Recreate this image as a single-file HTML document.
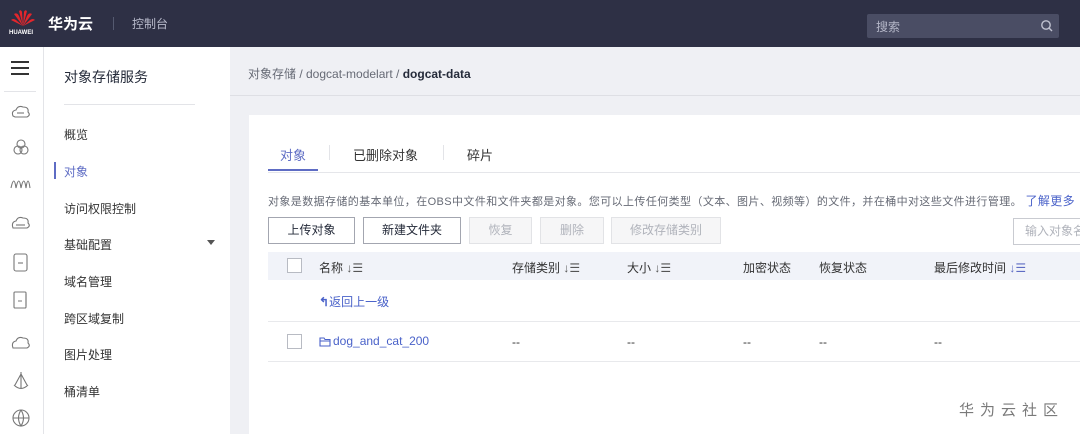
<!DOCTYPE html>
<html style="overflow:hidden;height:434px"><head><meta charset="utf-8"><style>
*{margin:0;padding:0;box-sizing:border-box}
body{width:1080px;height:434px;overflow:hidden;position:relative;background:#eff0f4;font-family:"Liberation Sans","Noto Sans CJK SC",sans-serif;color:#252b3a}
.a{position:absolute;white-space:nowrap}
.hdr{left:0;top:0;width:1080px;height:47px;background:#2e3045}
.nav{left:44px;top:47px;width:186px;height:387px;background:#fff}
.ib{left:0;top:47px;width:44px;height:387px;background:#fff;border-right:1px solid #e3e4e8}
.nv{font-size:12px;color:#333;left:64px}
.card{left:249px;top:115px;width:831px;height:319px;background:#fff}
.btn{height:27px;border:1px solid #a3a6b0;font-size:12px;color:#252b3a;text-align:center;line-height:25px;background:#fff}
.dis{border-color:#e2e3e6;background:#f6f6f7;color:#b0b3bb}
.th{font-size:12px;color:#333}
.cb{width:15px;height:15px;border:1px solid #b8bbc3;background:#fff}
</style></head><body>
<div class="a hdr"></div>
<svg class="a" style="left:10px;top:8px" width="26" height="20" viewBox="0 0 26 20"><g fill="#e3262c"><path d="M13 18 L9 3 Q11 1 12 4Z"/><path d="M13 18 L17 3 Q15 1 14 4Z"/><path d="M13 18 L4 6 Q7 4 9 8Z"/><path d="M13 18 L22 6 Q19 4 17 8Z"/><path d="M13 18 L1 12 Q3 10 6 12Z"/><path d="M13 18 L25 12 Q23 10 20 12Z"/></g></svg>
<div class="a" style="left:9px;top:30px;font-size:6px;color:#fff;font-weight:bold">HUAWEI</div>
<div class="a" style="left:48px;top:13px;font-size:15px;color:#fff;font-weight:bold">华为云</div>
<div class="a" style="left:113px;top:17px;width:1px;height:13px;background:#555a70"></div>
<div class="a" style="left:132px;top:15px;font-size:12px;color:#b8bacb">控制台</div>
<div class="a" style="left:867px;top:14px;width:192px;height:24px;background:#4a4d64;border-radius:2px"></div>
<div class="a" style="left:876px;top:18px;font-size:12px;color:#b5b7c8">搜索</div>
<svg class="a" style="left:1040px;top:19px" width="13" height="13"><circle cx="6" cy="6" r="4.2" stroke="#c0c2d0" stroke-width="1.4" fill="none"/><path d="M9 9 L12 12" stroke="#c0c2d0" stroke-width="1.4"/></svg>

<div class="a ib"></div>
<div class="a" style="left:11px;top:61px;width:18px;height:2px;background:#333;box-shadow:0 6px 0 #333,0 12px 0 #333"></div>
<div class="a" style="left:4px;top:91px;width:32px;height:1px;background:#e3e4e8"></div>
<svg class="a" style="left:10px;top:102px" width="22" height="332" fill="none" stroke="#777" stroke-width="1.1">
<path d="M3 14 Q1 9 6 8 Q8 3 13 5 Q19 5 18 10 Q21 13 17 15 H5Z"/><path d="M7 11 H14"/>
<circle cx="8" cy="48" r="4"/><circle cx="14" cy="48" r="4"/><circle cx="11" cy="42" r="4"/>
<path d="M1 86 Q4 72 6 86 Q9 72 11 86 Q14 72 16 86 Q18 72 20 86"/>
<path d="M3 126 Q1 120 6 119 Q8 114 13 116 Q19 116 18 121 Q21 124 17 126 H5Z"/><path d="M6 123 H15"/>
<rect x="4" y="152" width="13" height="17" rx="2"/><path d="M8 161 H13"/>
<rect x="4" y="190" width="12" height="16" rx="1"/><path d="M8 199 H12 M16 192 V204"/>
<path d="M3 246 Q1 240 6 239 Q8 234 13 236 Q19 236 18 241 Q21 244 17 246 H5Z"/>
<path d="M11 270 L11 287 M4 283 Q11 290 18 283 M11 272 L5 283 M11 272 L17 283"/>
<circle cx="11" cy="316" r="8"/><path d="M3 316 H19 M11 308 Q6 316 11 324 Q16 316 11 308"/>
</svg>

<div class="a nav"></div>
<div class="a" style="left:64px;top:67px;font-size:14px;color:#252b3a">对象存储服务</div>
<div class="a" style="left:64px;top:104px;width:131px;height:1px;background:#e3e4e8"></div>
<div class="a nv" style="top:126px">概览</div>
<div class="a" style="left:54px;top:162px;width:2px;height:17px;background:#5e6cc4"></div>
<div class="a nv" style="top:163px;color:#5e6cc4">对象</div>
<div class="a nv" style="top:200px">访问权限控制</div>
<div class="a nv" style="top:236px">基础配置</div>
<div class="a" style="left:207px;top:240px;width:0;height:0;border-left:4px solid transparent;border-right:4px solid transparent;border-top:5px solid #555"></div>
<div class="a nv" style="top:273px">域名管理</div>
<div class="a nv" style="top:310px">跨区域复制</div>
<div class="a nv" style="top:346px">图片处理</div>
<div class="a nv" style="top:383px">桶清单</div>

<div class="a" style="left:230px;top:95px;width:850px;height:1px;background:#dedfe4"></div>
<div class="a" style="left:248px;top:65px;font-size:12px;color:#666a75">对象存储 / dogcat-modelart / <b style="color:#252b3a">dogcat-data</b></div>

<div class="a card"></div>
<div class="a" style="left:268px;top:172px;width:812px;height:1px;background:#e5e6ea"></div>
<div class="a" style="left:280px;top:145px;font-size:13px;color:#5e6cc4">对象</div>
<div class="a" style="left:268px;top:169px;width:50px;height:2px;background:#5e6cc4"></div>
<div class="a" style="left:329px;top:145px;width:1px;height:15px;background:#e3e4e8"></div>
<div class="a" style="left:353px;top:145px;font-size:13px;color:#333">已删除对象</div>
<div class="a" style="left:443px;top:145px;width:1px;height:15px;background:#e3e4e8"></div>
<div class="a" style="left:467px;top:145px;font-size:13px;color:#333">碎片</div>
<div class="a" style="left:268px;top:192px;font-size:11px;letter-spacing:0.4px;color:#666a75">对象是数据存储的基本单位，在OBS中文件和文件夹都是对象。您可以上传任何类型（文本、图片、视频等）的文件，并在桶中对这些文件进行管理。 <span style="color:#4a62c9;font-size:12px">了解更多</span></div>
<div class="a btn" style="left:268px;top:217px;width:87px">上传对象</div>
<div class="a btn" style="left:363px;top:217px;width:98px">新建文件夹</div>
<div class="a btn dis" style="left:469px;top:217px;width:63px">恢复</div>
<div class="a btn dis" style="left:540px;top:217px;width:64px">删除</div>
<div class="a btn dis" style="left:611px;top:217px;width:110px">修改存储类别</div>
<div class="a btn" style="left:1013px;top:218px;width:80px;text-align:left;padding-left:11px;color:#b0b3bb;border-color:#c9cbd1">输入对象名</div>

<div class="a" style="left:268px;top:252px;width:812px;height:28px;background:#f1f3f9"></div>
<div class="a cb" style="left:287px;top:258px"></div>
<div class="a th" style="left:319px;top:259px">名称 <span style="color:#555">↓☰</span></div>
<div class="a th" style="left:512px;top:259px">存储类别 <span style="color:#555">↓☰</span></div>
<div class="a th" style="left:627px;top:259px">大小 <span style="color:#555">↓☰</span></div>
<div class="a th" style="left:743px;top:259px">加密状态</div>
<div class="a th" style="left:819px;top:259px">恢复状态</div>
<div class="a th" style="left:934px;top:259px">最后修改时间 <span style="color:#5e6cc4">↓☰</span></div>
<div class="a" style="left:319px;top:293px;font-size:12px;color:#4a62c9"><span style="font-weight:bold">↰</span>返回上一级</div>
<div class="a" style="left:268px;top:321px;width:812px;height:1px;background:#e8e9ec"></div>
<div class="a cb" style="left:287px;top:334px"></div>
<svg class="a" style="left:319px;top:336px" width="12" height="11" fill="none" stroke="#4a62c9" stroke-width="1.1"><path d="M1 2 H5 L6 3.5 H11 V10 H1Z M1 5 H11"/></svg>
<div class="a" style="left:333px;top:334px;font-size:12px;color:#4a62c9">dog_and_cat_200</div>
<div class="a th" style="left:512px;top:335px">--</div>
<div class="a th" style="left:627px;top:335px">--</div>
<div class="a th" style="left:743px;top:335px">--</div>
<div class="a th" style="left:819px;top:335px">--</div>
<div class="a th" style="left:934px;top:335px">--</div>
<div class="a" style="left:268px;top:361px;width:812px;height:1px;background:#e8e9ec"></div>
<div class="a" style="left:959px;top:399px;font-size:15px;color:#7a7a7a;letter-spacing:6px">华为云社区</div>
</body></html>
